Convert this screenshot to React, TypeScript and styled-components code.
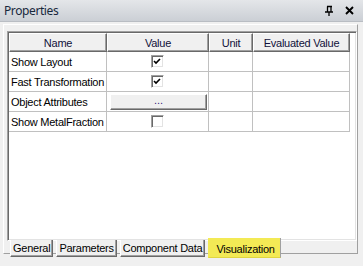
import React from "react";
import styled, { createGlobalStyle } from "styled-components";

const Global = createGlobalStyle`
  html, body { margin: 0; padding: 0; background: #f0f0f0; }
  body { font-family: "Liberation Sans", Arial, sans-serif; }
`;

const Window = styled.div`
  width: 363px;
  height: 266px;
  display: flex;
  flex-direction: column;
  background: #f0f0f0;
  overflow: hidden;
`;

const TitleBar = styled.div`
  height: 22px;
  box-sizing: border-box;
  display: flex;
  align-items: center;
  padding: 0 6px 0 4px;
  background: linear-gradient(#e4e6e9, #cbcfd5);
  border-bottom: 1px solid #b9bdc3;
`;

const Title = styled.span`
  flex: 1;
  font-family: "Noto Sans", sans-serif;
  font-size: 12px;
  color: #18283c;
  letter-spacing: -0.4px;
`;

const TitleButton = styled.span`
  width: 16px;
  height: 16px;
  display: flex;
  align-items: center;
  justify-content: center;
  margin-left: 4px;
`;

const Body = styled.div`
  flex: 1;
  display: flex;
  flex-direction: column;
  padding: 2px 5px 0 3px;
`;

const TabPage = styled.div`
  height: 230px;
  box-sizing: border-box;
  border-top: 1px solid #ffffff;
  border-left: 1px solid #ffffff;
  border-right: 1px solid #a0a0a0;
  border-bottom: 1px solid #a0a0a0;
  padding: 6px 0 0 3px;
`;

const GridFrame = styled.div`
  width: 350px;
  height: 210px;
  box-sizing: border-box;
  background: #ffffff;
  border-top: 1px solid #a0a0a0;
  border-left: 1px solid #a0a0a0;
  border-right: 1px solid #ffffff;
  border-bottom: 1px solid #ffffff;
  box-shadow: inset 1px 1px 0 #696969, inset -1px -1px 0 #e3e3e3;
  padding: 1px 0 0 1px;
`;

const Grid = styled.div`
  display: grid;
  grid-template-columns: 98px 102px 44px 97px;
  font-size: 11px;
  letter-spacing: -0.25px;
  color: #000;
`;

const HeadCell = styled.div`
  height: 19px;
  box-sizing: border-box;
  display: flex;
  align-items: center;
  justify-content: center;
  background: #f0f0f0;
  border-top: 1px solid #ffffff;
  border-left: 1px solid #ffffff;
  border-right: 1px solid #696969;
  border-bottom: 1px solid #696969;
  box-shadow: inset -1px -1px 0 #a0a0a0;
  color: #10103a;
`;

const Cell = styled.div<{ $center?: boolean }>`
  height: 20px;
  box-sizing: border-box;
  display: flex;
  align-items: center;
  justify-content: ${(p) => (p.$center ? "center" : "flex-start")};
  padding-left: ${(p) => (p.$center ? "0" : "2px")};
  border-right: 1px solid #c0c0c0;
  border-bottom: 1px solid #c0c0c0;
  background: #ffffff;
`;

const CheckBox = styled.span`
  width: 13px;
  height: 13px;
  box-sizing: border-box;
  display: flex;
  align-items: center;
  justify-content: center;
  background: #ffffff;
  border-top: 1px solid #a0a0a0;
  border-left: 1px solid #a0a0a0;
  border-right: 1px solid #ffffff;
  border-bottom: 1px solid #ffffff;
  box-shadow: inset 1px 1px 0 #696969, inset -1px -1px 0 #e3e3e3;
`;

const EllipsisButton = styled.button`
  width: 97px;
  height: 16px;
  box-sizing: border-box;
  margin-left: 1px;
  padding: 0 0 4px 0;
  background: #f0f0f0;
  border-top: 1px solid #ffffff;
  border-left: 1px solid #ffffff;
  border-right: 1px solid #696969;
  border-bottom: 1px solid #696969;
  box-shadow: inset -1px -1px 0 #a0a0a0;
  font-family: "Liberation Sans", Arial, sans-serif;
  font-size: 11px;
  color: #3a1a80;
  line-height: 10px;
`;

const TabStrip = styled.div`
  display: flex;
  align-items: flex-start;
  padding-left: 7px;
  margin-top: -14px;
`;

const Tab = styled.div<{ $active?: boolean }>`
  box-sizing: border-box;
  height: ${(p) => (p.$active ? "20px" : "17px")};
  margin-top: ${(p) => (p.$active ? "-2px" : "0")};
  padding: ${(p) => (p.$active ? "3px 5px 0 7px" : "0 2px 0 2px")};
  margin-right: ${(p) => (p.$active ? "0" : "3px")};
  display: flex;
  align-items: center;
  font-size: 11px;
  letter-spacing: -0.25px;
  color: #000;
  background: ${(p) => (p.$active ? "#f3ea55" : "#f0f0f0")};
  border-left: 1px solid ${(p) => (p.$active ? "#f3ea55" : "#ffffff")};
  border-right: 1px solid ${(p) => (p.$active ? "#a0a0a0" : "#696969")};
  border-bottom: 1px solid ${(p) => (p.$active ? "#e0d640" : "#696969")};
  box-shadow: ${(p) => (p.$active ? "none" : "inset -1px -1px 0 #a0a0a0")};
`;

const Check = () => (
  <svg width="9" height="9" viewBox="0 0 9 9">
    <path d="M1 4 L3 6 L7 2" stroke="#000" strokeWidth="1.6" fill="none" />
  </svg>
);

const PinIcon = () => (
  <svg width="10" height="12" viewBox="0 0 10 12">
    <path d="M3 1.5 H8 M3.5 1.5 V7 M7 1.5 V7 M1 7 H9 M5 7 V11" stroke="#000" strokeWidth="1.3" fill="none" />
  </svg>
);

const CloseIcon = () => (
  <svg width="9" height="9" viewBox="0 0 9 9">
    <path d="M1 1 L8 8 M8 1 L1 8" stroke="#000" strokeWidth="1.9" fill="none" />
  </svg>
);

type Row = { name: string; kind: "check" | "empty" | "button" };
const rows: Row[] = [
  { name: "Show Layout", kind: "check" },
  { name: "Fast Transformation", kind: "check" },
  { name: "Object Attributes", kind: "button" },
  { name: "Show MetalFraction", kind: "empty" },
];

export default function App() {
  return (
    <Window>
      <Global />
      <TitleBar>
        <Title>Properties</Title>
        <TitleButton><PinIcon /></TitleButton>
        <TitleButton><CloseIcon /></TitleButton>
      </TitleBar>
      <Body>
        <TabPage>
          <GridFrame>
            <Grid>
              <HeadCell>Name</HeadCell>
              <HeadCell>Value</HeadCell>
              <HeadCell>Unit</HeadCell>
              <HeadCell>Evaluated Value</HeadCell>
              {rows.map((r) => (
                <React.Fragment key={r.name}>
                  <Cell>{r.name}</Cell>
                  <Cell $center={r.kind !== "button"}>
                    {r.kind === "check" && (
                      <CheckBox><Check /></CheckBox>
                    )}
                    {r.kind === "empty" && <CheckBox />}
                    {r.kind === "button" && <EllipsisButton>...</EllipsisButton>}
                  </Cell>
                  <Cell />
                  <Cell />
                </React.Fragment>
              ))}
            </Grid>
          </GridFrame>
        </TabPage>
        <TabStrip>
          <Tab>General</Tab>
          <Tab>Parameters</Tab>
          <Tab>Component Data</Tab>
          <Tab $active>Visualization</Tab>
        </TabStrip>
      </Body>
    </Window>
  );
}
